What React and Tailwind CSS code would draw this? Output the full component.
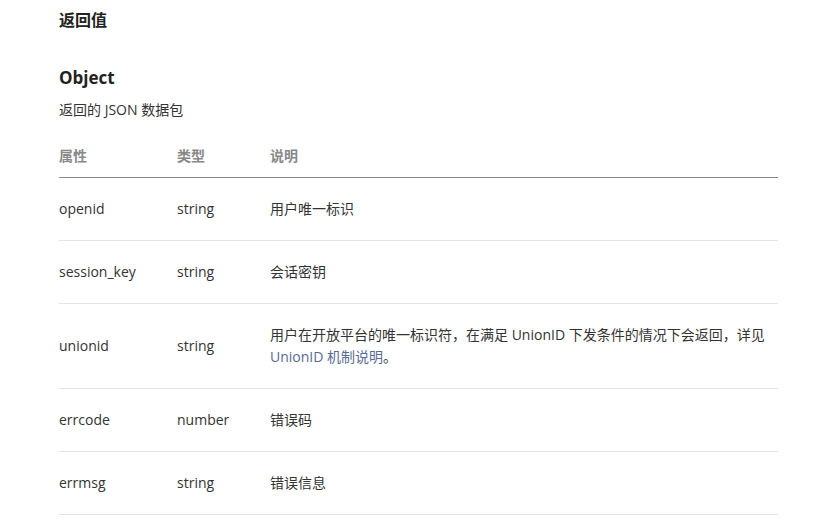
const rows = [
  { name: 'openid', type: 'string', desc: '用户唯一标识' },
  { name: 'session_key', type: 'string', desc: '会话密钥' },
  {
    name: 'unionid',
    type: 'string',
    desc: (
      <>
        用户在开放平台的唯一标识符，在满足 UnionID 下发条件的情况下会返回，详见
        <a className="text-[#576b95]">UnionID 机制说明</a>。
      </>
    ),
  },
  { name: 'errcode', type: 'number', desc: '错误码' },
  { name: 'errmsg', type: 'string', desc: '错误信息' },
];

export default function App() {
  return (
    <div
      className="min-h-screen bg-white text-[#333] pl-[59px] pr-[56px]"
      style={{ fontFamily: '"Segoe UI", "Open Sans", "Noto Sans CJK SC", sans-serif' }}
    >
      {/* 返回值 */}
      <h2 className="pt-[8px] text-[16px] font-bold leading-[24px] text-[#222]">返回值</h2>

      <h3 className="mt-[33px] text-[17px] font-bold leading-[26px] text-[#222]">Object</h3>
      <p className="mt-[8px] text-[14px] leading-[22px]">返回的 JSON 数据包</p>

      <table className="mt-[15px] w-[719px] text-[14px] leading-[22px] border-collapse">
        <thead>
          <tr className="border-b border-[#888]">
            <th className="w-[118px] pt-[9px] pb-[10px] text-left font-bold text-[#888]">属性</th>
            <th className="w-[93px] pt-[9px] pb-[10px] text-left font-bold text-[#888]">类型</th>
            <th className="pt-[9px] pb-[10px] text-left font-bold text-[#888]">说明</th>
          </tr>
        </thead>
        <tbody>
          {rows.map((r) => (
            <tr key={r.name} className="border-b border-[#e5e5e5]">
              <td className="py-[20px] align-middle">{r.name}</td>
              <td className="py-[20px] align-middle">{r.type}</td>
              <td className="py-[20px] align-middle">{r.desc}</td>
            </tr>
          ))}
        </tbody>
      </table>
    </div>
  );
}
